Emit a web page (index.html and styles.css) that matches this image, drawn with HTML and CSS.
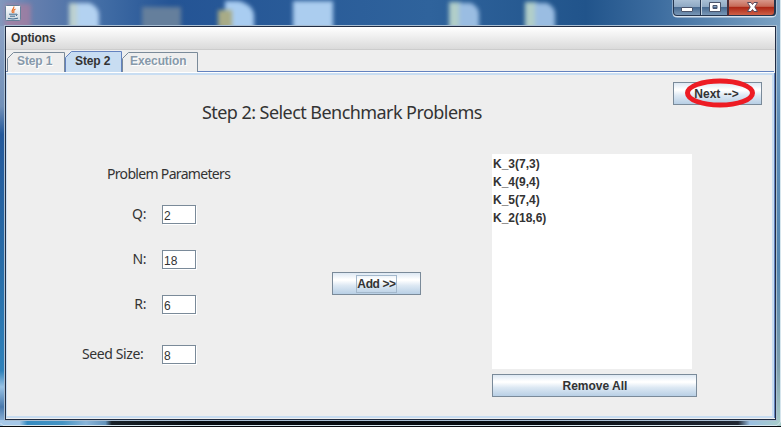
FILE: index.html
```html
<!DOCTYPE html>
<html lang="en">
<head>
<meta charset="utf-8">
<title>Step 2</title>
<link rel="stylesheet" href="styles.css">
</head>
<body>
<div class="window">
  <svg class="glass" width="781" height="427" viewBox="0 0 781 427" aria-hidden="true">
    <defs>
      <linearGradient id="sky" x1="0" x2="1" y1="0" y2="0"><stop offset="0" stop-color="#8298bd"/><stop offset=".04" stop-color="#667fae"/><stop offset=".13" stop-color="#426da5"/><stop offset=".22" stop-color="#245495"/><stop offset=".55" stop-color="#2f639c"/><stop offset=".75" stop-color="#21548b"/><stop offset=".84" stop-color="#3c6c9f"/><stop offset="1" stop-color="#7da3c4"/></linearGradient>
      <linearGradient id="left" x1="0" x2="0" y1="0" y2="1"><stop offset="0" stop-color="#8ca2c4"/><stop offset=".2" stop-color="#7291b9"/><stop offset=".27" stop-color="#24599b"/><stop offset=".6" stop-color="#286da8"/><stop offset=".86" stop-color="#2f82bb"/><stop offset=".9" stop-color="#98c2e5"/><stop offset=".95" stop-color="#4979ad"/><stop offset="1" stop-color="#a6c8e8"/></linearGradient>
      <linearGradient id="right" x1="0" x2="0" y1="0" y2="1"><stop offset="0" stop-color="#7fa5c5"/><stop offset=".25" stop-color="#5b8bb6"/><stop offset=".6" stop-color="#5184af"/><stop offset=".85" stop-color="#7d9eac"/><stop offset="1" stop-color="#a9cdca"/></linearGradient>
      <linearGradient id="base" x1="0" x2="1" y1="0" y2="0"><stop offset="0" stop-color="#a6c8e8"/><stop offset=".025" stop-color="#a6c8e8"/><stop offset=".035" stop-color="#358bc1"/><stop offset=".08" stop-color="#4594c4"/><stop offset=".11" stop-color="#8ab5d9"/><stop offset=".135" stop-color="#6393bb"/><stop offset=".143" stop-color="#182128"/><stop offset=".25" stop-color="#080d12"/><stop offset=".7" stop-color="#080d12"/><stop offset=".945" stop-color="#202733"/><stop offset=".96" stop-color="#9abfe1"/><stop offset="1" stop-color="#a9cdca"/></linearGradient>
    </defs>
    <rect width="781" height="427" fill="url(#sky)"/>
    <g class="icons">
      <rect x="5" y="4" width="26" height="24" fill="#b17d9c" opacity=".65"/>
      <rect x="69" y="3" width="14" height="26" fill="#bdd1d0"/><path d="M77 3h13q9 5 9 11v15H77z" fill="#b3d2f1"/>
      <rect x="142" y="7" width="39" height="22" fill="#657f9c"/>
      <path d="M225 1h14q14 4 15 14v14h-29z" fill="#a9cdf1"/><rect x="218" y="10" width="14" height="18" fill="#a8ab86"/>
      <rect x="293" y="1" width="40" height="28" fill="#abcdef"/>
      <rect x="449" y="2" width="12" height="27" fill="#b1cec9"/><path d="M459 3h12q8 4 8 11v15h-20z" fill="#9abde2"/>
      <rect x="525" y="2" width="12" height="27" fill="#b1cec9"/><path d="M535 3h12q8 4 8 11v15h-20z" fill="#9abde2"/>
    </g>
    <rect y="26" width="5" height="401" fill="url(#left)"/>
    <rect x="776" y="26" width="5" height="401" fill="url(#right)"/>
    <rect x="0" y="420" width="781" height="5" fill="url(#base)"/>
    <path d="M780.5 0V422L777 425.500H3L.5 423" fill="none" stroke="#d5e5ed"/>
    <path d="M0 426.500H781" stroke="#080b10"/>
  </svg>

  <header class="titlebar">
    <svg class="java" width="16" height="16" viewBox="0 0 16 16">
      <defs><linearGradient id="tile" x1="0" x2="0" y1="0" y2="1"><stop offset="0" stop-color="#fff"/><stop offset="1" stop-color="#c9d5df"/></linearGradient></defs>
      <rect x=".5" y=".5" width="15" height="15" rx="1" fill="url(#tile)" stroke="#67809a"/>
      <path d="M8.800 1.500C9.500 4 5.500 4.500 7.500 8M10.500 4C7 5.500 9.800 6.500 8.500 8" fill="none" stroke="#ea6b20" stroke-width="1.200"/>
      <path d="M4 9.200h7M5 11.200h5M3 13.400q5 1.300 10-.2M11 9q2.500 0 0 2" fill="none" stroke="#426b8d"/>
    </svg>
    <svg class="controls" width="106" height="19" viewBox="0 0 106 19">
      <defs>
        <linearGradient id="glassbtn" x1="0" x2="0" y1="0" y2="1"><stop offset="0" stop-color="#a9bfd5"/><stop offset=".45" stop-color="#8fa9c4"/><stop offset=".5" stop-color="#496b91"/><stop offset="1" stop-color="#7897b7"/></linearGradient>
        <linearGradient id="redbtn" x1="0" x2="0" y1="0" y2="1"><stop offset="0" stop-color="#d8978a"/><stop offset=".42" stop-color="#c76b58"/><stop offset=".5" stop-color="#ad2816"/><stop offset="1" stop-color="#cf6047"/></linearGradient>
      </defs>
      <path d="M.5 0v13q0 4.500 5 4.500h94q5 0 5-4.500V0z" fill="#d4e0ec"/>
      <path d="M1 0v12q0 4 4 4h96q3 0 3-4V0z" fill="#24354f"/>
      <path d="M2 0v12q0 3 3 3h23V0z" fill="url(#glassbtn)"/><path d="M30 0h25v15H30z" fill="url(#glassbtn)"/>
      <path d="M57 0h45v12q0 3-3 3H57z" fill="url(#redbtn)"/>
      <path d="M29.500 0v15" stroke="#c2d0de"/><path d="M56 0v16" stroke="#6d2928"/>
      <rect x="9.500" y="7.500" width="11" height="4" rx=".5" fill="#fff" stroke="#49536a"/>
      <path d="M37.500 2.500h11v9h-11zM41 5.500v3h4v-3z" fill="#fff" fill-rule="evenodd" stroke="#49536a"/>
      <path d="M75.500 2.500h3.500l1.500 2 1.500-2h3.500L82.800 7l2.700 4.500H82l-1.500-2-1.500 2h-3.500L78.200 7z" fill="#fff" stroke="#57485a"/>
    </svg>
  </header>

  <main class="client">
    <nav class="menubar">Options</nav>
    <div class="tabs">
      <div class="tab tab-one"><svg width="58" height="20" viewBox="0 0 58 20"><path d="M.5 20V6.500L6.500.5h51V20"/></svg><span>Step 1</span></div>
      <div class="tab tab-two active"><svg width="57" height="21" viewBox="0 0 57 21"><path d="M.5 21V6.500L6.500.5h50V21"/></svg><span>Step 2</span></div>
      <div class="tab tab-three"><svg width="76" height="20" viewBox="0 0 76 20"><path d="M.5 20V6.500L6.500.5h69V20"/></svg><span>Execution</span></div>
    </div>
    <section class="pane">
      <div class="heading">
        <h1>Step 2: Select Benchmark Problems</h1>
        <div class="next">
          <button class="button">Next --&gt;</button>
          <svg class="ring" width="72" height="30" viewBox="0 0 72 30"><ellipse cx="36" cy="15" rx="32.500" ry="12" fill="none" stroke="#ed1c24" stroke-width="5"/></svg>
        </div>
      </div>
      <div class="work">
        <form class="parameters">
          <h2>Problem Parameters</h2>
          <label class="row"><span>Q:</span><input value="2"></label>
          <label class="row"><span>N:</span><input value="18"></label>
          <label class="row"><span>R:</span><input value="6"></label>
          <label class="row seed"><span>Seed Size:</span><input value="8"></label>
        </form>
        <button class="button add"><span>Add &gt;&gt;</span></button>
        <div class="selection">
          <ul><li>K_3(7,3)</li><li>K_4(9,4)</li><li>K_5(7,4)</li><li>K_2(18,6)</li></ul>
          <button class="button remove">Remove All</button>
        </div>
      </div>
    </section>
  </main>
</div>
</body>
</html>
```

FILE: styles.css
```css
* { box-sizing: border-box; }
body { margin: 0; overflow: hidden; color: #333; font: bold 12px/16px "Liberation Sans", sans-serif; }
.window { position: relative; width: 781px; height: 427px; padding: 0 4px; }
.glass { position: absolute; left: 0; top: 0; }
.icons { filter: blur(2px); }
.titlebar { position: relative; height: 25px; display: flex; justify-content: space-between; padding: 0 0 0 1px; }
.java { margin-top: 5px; }
.controls { margin-right: -1px; }
.client { position: relative; width: 773px; height: 396px; border: 1px solid #a9bed2; background: #eee; box-shadow: inset 0 0 0 1px #202c43; padding: 1px; display: flex; flex-direction: column; }
.menubar { height: 23px; padding: 3px 5px; border-bottom: 1px solid #ccc; background: linear-gradient(#fff, #dadada); letter-spacing: -.1px; }
.tabs { height: 21px; margin-top: 1px; padding-left: 1px; display: flex; align-items: flex-end; }
.tab { position: relative; height: 20px; color: #8799aa; text-shadow: 1px 1px #fff; }
.tab svg { position: absolute; left: 0; top: 0; fill: #eee; stroke: #7a8a99; }
.tab span { position: relative; display: block; padding: 1px 0 0 10px; letter-spacing: -.1px; }
.tab-one { width: 58px; }
.tab-two { width: 57px; height: 21px; z-index: 1; }
.tab-three { width: 76px; }
.tab-three span { padding-left: 8px; }
.tab.active { color: #333; text-shadow: none; }
.active svg { fill: #c8ddf2; stroke: #6382bf; }
.active span { padding-top: 2px; }
.pane { flex: 1; border: solid #c8ddf2; border-width: 2px 2px 2px 1px; box-shadow: 0 -1px #fff, 0 -2px #6382bf, 1px 0 #6382bf; margin: 1px 1px 1px 0; }
.heading { height: 79px; display: flex; align-items: flex-start; justify-content: space-between; padding: 7px 10px 0 195px; }
h1, h2 { margin: 0; font-family: "Noto Sans", sans-serif; font-weight: normal; white-space: nowrap; }
h1 { margin-top: 18px; font-size: 18px; line-height: 24px; letter-spacing: -.56px; }
.button { display: flex; align-items: center; justify-content: center; height: 23px; padding: 1px 2px 0 0; border: 1px solid #7a8a99; background: linear-gradient(#dde8f3, #fff 30%, #fff 35%, #dce8f3 60%, #b8cfe5); color: #333; font: inherit; }
.next { position: relative; }
.next .button { width: 89px; }
.ring { position: absolute; left: 11px; top: -4px; }
.work { display: flex; align-items: flex-start; }
.parameters { width: 325px; padding-top: 10px; }
h2 { margin-left: 100px; font-size: 14px; line-height: 20px; letter-spacing: -.68px; }
.row { display: flex; align-items: flex-start; height: 45px; padding-left: 75px; }
.parameters h2 + .row { margin-top: 21px; }
.row span { width: 80px; padding-right: 16px; text-align: right; white-space: nowrap; font: 14px/17px "Noto Sans", sans-serif; letter-spacing: -.4px; }
.seed { margin-top: 5px; }
.seed span { padding-right: 19px; }
input { width: 34px; height: 19px; padding: 2px 0 0 1px; border: 1px solid #7a8a99; border-radius: 0; background: #fff; box-shadow: 1px 1px #fff; color: #333; font: 12px/15px "Liberation Sans", sans-serif; outline: none; }
.add { width: 89px; margin-top: 118px; padding: 0; }
.add span { width: 41px; height: 18px; line-height: 17px; border: 1px solid #a3b8cc; letter-spacing: -.4px; white-space: nowrap; }
.selection { width: 205px; margin-left: 71px; }
ul { width: 200px; height: 215px; margin: 0 0 5px; padding: 1px; background: #fff; list-style: none; line-height: 18px; }
.remove { width: 205px; padding-right: 0; padding-left: 1px; }
```
